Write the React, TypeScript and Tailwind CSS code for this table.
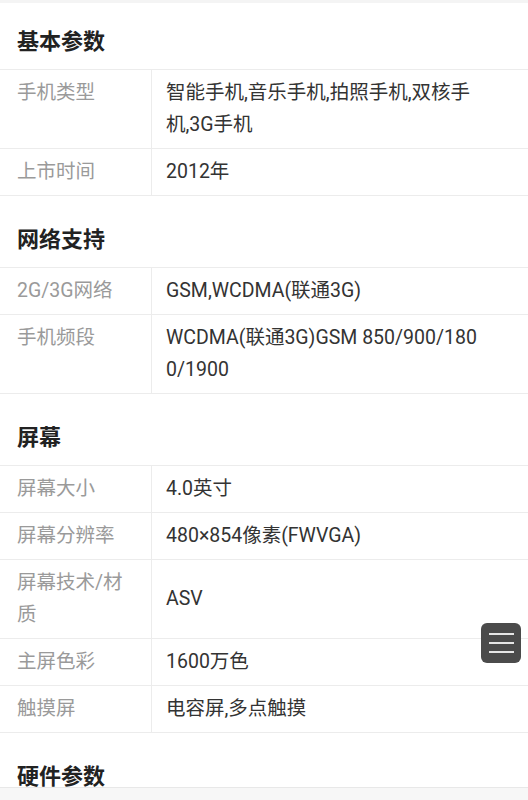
import React from 'react';

interface SpecRow {
  label: string;
  value: string;
}

interface SpecSection {
  title: string;
  rows: SpecRow[];
}

const sections: SpecSection[] = [
  {
    title: '基本参数',
    rows: [
      { label: '手机类型', value: '智能手机,音乐手机,拍照手机,双核手机,3G手机' },
      { label: '上市时间', value: '2012年' },
    ],
  },
  {
    title: '网络支持',
    rows: [
      { label: '2G/3G网络', value: 'GSM,WCDMA(联通3G)' },
      { label: '手机频段', value: 'WCDMA(联通3G)GSM 850/900/1800/1900' },
    ],
  },
  {
    title: '屏幕',
    rows: [
      { label: '屏幕大小', value: '4.0英寸' },
      { label: '屏幕分辨率', value: '480×854像素(FWVGA)' },
      { label: '屏幕技术/材质', value: 'ASV' },
      { label: '主屏色彩', value: '1600万色' },
      { label: '触摸屏', value: '电容屏,多点触摸' },
    ],
  },
  {
    title: '硬件参数',
    rows: [],
  },
];

const Section: React.FC<{ section: SpecSection; first?: boolean }> = ({ section, first }) => (
  <div>
    {/* section heading */}
    <h2
      className={`px-[17px] ${first ? 'pt-[24px]' : 'pt-[29px]'} pb-[12px] text-[22px] leading-[30px] font-bold text-[#222]`}
    >
      {section.title}
    </h2>
    {section.rows.length > 0 && (
      <div className="border-t border-[#ececec]">
        {section.rows.map((row) => (
          <div key={row.label} className="flex border-b border-[#ececec]">
            <div className="w-[152px] shrink-0 border-r border-[#ececec] pl-[17px] pr-[14px] py-[7px] text-[#9a9a9a] break-all">
              {row.label}
            </div>
            <div className="flex-1 flex items-center pl-[14px] pr-[38px] py-[7px] text-[#333] break-all">
              {row.value}
            </div>
          </div>
        ))}
      </div>
    )}
  </div>
);

export default function App() {
  return (
    <div
      className="relative w-[528px] h-[800px] overflow-hidden bg-white text-[19.5px] leading-[32px]"
      style={{ fontFamily: "Roboto, 'Noto Sans CJK SC', sans-serif" }}
    >
      <div className="h-[3px] bg-[#f4f4f4]" />
      {sections.map((s, i) => (
        <Section key={s.title} section={s} first={i === 0} />
      ))}

      {/* floating menu button */}
      <button className="absolute left-[481px] top-[623px] w-[40px] h-[40px] rounded-[6px] bg-[#4b4b4b] flex flex-col items-center justify-center gap-[7px]">
        <span className="block w-[25px] h-[2px] bg-[#e6e6e6]" />
        <span className="block w-[25px] h-[2px] bg-[#e6e6e6]" />
        <span className="block w-[25px] h-[2px] bg-[#e6e6e6]" />
      </button>

      {/* bottom bar */}
      <div className="absolute left-0 right-0 top-[787px] bottom-0 border-t border-[#e8e8e8] bg-[#f7f7f7]" />
    </div>
  );
}
